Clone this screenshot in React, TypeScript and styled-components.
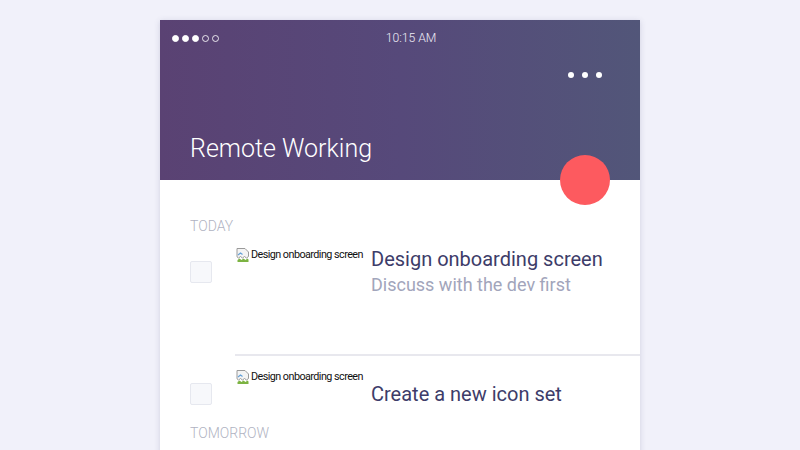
import * as React from 'react';
import styled, { createGlobalStyle } from 'styled-components';

interface Task {
    title: string;
    note?: string;
    image: string;
}

const today: Task[] = [
    { title: 'Design onboarding screen', note: 'Discuss with the dev first', image: 'Design onboarding screen' },
    { title: 'Create a new icon set', image: 'Design onboarding screen' },
];

const BrokenImage = (props: { alt: string }) => <StyledMedia>
    <svg width="16" height="16" viewBox="0 0 16 16">
        <path d="M2 1.5h8l3.5 3.5v4.5l-2 1.5-2-1.5-2 1.5-2-1.5-2 1.5-1.5-1.2z" fill="#f4f4f4" stroke="#9a9a9a" strokeWidth="1" />
        <path d="M2.5 13l2-1.4 2 1.4 2-1.4 2 1.4 2-1.4 1 0.8v2.6h-11z" fill="#7cb342" />
        <path d="M3 8l2.5-2 2 1.5" fill="none" stroke="#64a0d8" strokeWidth="1.2" />
    </svg>
    <span>{props.alt}</span>
</StyledMedia>;

const TaskItem = (props: { task: Task, divided: boolean }) => <>
    <StyledItem divided={props.divided}>
        <StyledCheck />
        <BrokenImage alt={props.task.image} />
        <StyledText>
            <StyledTaskTitle>{props.task.title}</StyledTaskTitle>
            {props.task.note && <StyledNote>{props.task.note}</StyledNote>}
        </StyledText>
    </StyledItem>
    {props.divided && <StyledDivider />}
</>;

const App = () => {
    return <>
        <GlobalStyle />
        <StyledCard>
            <StyledHeader>
                <StyledStatus>
                    <StyledSignal>
                        {[0, 1, 2, 3, 4].map(i => <StyledBar key={i} filled={i < 3} />)}
                    </StyledSignal>
                    <StyledTime>10:15 AM</StyledTime>
                    <div />
                </StyledStatus>
                <StyledMenu>
                    <span /><span /><span />
                </StyledMenu>
                <StyledTitle>Remote Working</StyledTitle>
                <StyledFab />
            </StyledHeader>
            <StyledBody>
                <StyledSection>Today</StyledSection>
                {today.map((task, i) => <TaskItem key={task.title} task={task} divided={i < today.length - 1} />)}
                <StyledSection>Tomorrow</StyledSection>
            </StyledBody>
        </StyledCard>
    </>;
}

const GlobalStyle = createGlobalStyle`
body {
    margin: 0;
    background: #f1f1fa;
    font-family: Roboto, "Liberation Sans", sans-serif;
    overflow: hidden;
}
`

const StyledCard = styled.div`
width: 480px;
margin: 20px auto 0 auto;
min-height: 460px;
background: #fff;
box-shadow: 0 1px 6px rgba(60, 60, 110, 0.18);
`

const StyledHeader = styled.div`
position: relative;
height: 160px;
box-sizing: border-box;
padding: 11px 12px 0 12px;
background: linear-gradient(90deg, #5a4273 0%, #56497a 50%, #525679 100%);
color: #fff;
display: flex;
flex-direction: column;
`

const StyledStatus = styled.div`
display: grid;
grid-template-columns: 1fr auto 1fr;
align-items: center;
height: 14px;
padding-right: 20px;
`

const StyledSignal = styled.div`
display: flex;
gap: 3px;
`

const StyledBar = styled.span<{ filled: boolean }>`
width: 7px;
height: 7px;
border-radius: 50%;
box-sizing: border-box;
border: 1px solid #fff;
background: ${p => p.filled ? '#fff' : 'transparent'};
opacity: ${p => p.filled ? 1 : 0.85};
`

const StyledTime = styled.div`
margin-left: 42px;
font-size: 12.2px;
font-weight: 300;
color: #f0edf6;
`

const StyledMenu = styled.div`
align-self: flex-end;
display: flex;
gap: 8px;
margin: 27px 26px 0 0;
span {
    width: 6px;
    height: 6px;
    border-radius: 50%;
    background: #fff;
}
`

const StyledTitle = styled.h1`
margin: 56px 0 0 18px;
font-size: 25px;
font-weight: 300;
line-height: 30px;
color: #fff;
`

const StyledFab = styled.div`
position: absolute;
right: 30px;
bottom: -25px;
width: 50px;
height: 50px;
border-radius: 50%;
background: #fd5a5f;
`

const StyledBody = styled.div`
padding: 38px 0 0 30px;
`

const StyledSection = styled.div`
font-size: 14px;
font-weight: 300;
line-height: 16px;
color: #b0b3c2;
text-transform: uppercase;
`

const StyledItem = styled.div<{ divided: boolean }>`
display: flex;
align-items: center;
min-height: 50px;
padding: 13px 0 ${p => p.divided ? '57px' : '6px'} 0;
`

const StyledCheck = styled.div`
flex: none;
width: 22px;
height: 22px;
box-sizing: border-box;
border: 1px solid #e6e8ef;
border-radius: 2px;
background: #f7f8fb;
margin-right: 23px;
`

const StyledMedia = styled.div`
align-self: flex-start;
flex: none;
width: 136px;
display: flex;
align-items: center;
white-space: nowrap;
font-family: Roboto, sans-serif;
font-size: 10.8px;
letter-spacing: -0.55px;
line-height: 12px;
color: #111;
svg {
    flex: none;
    width: 16px;
    height: 16px;
}
`

const StyledText = styled.div`
display: flex;
flex-direction: column;
`

const StyledTaskTitle = styled.div`
font-size: 20px;
line-height: 24px;
color: #3d3c69;
`

const StyledNote = styled.div`
margin-top: 2px;
font-size: 18px;
line-height: 24px;
color: #a2a5bb;
`

const StyledDivider = styled.div`
height: 2px;
background: #e8e8ee;
margin-left: 45px;
`

export default App;
